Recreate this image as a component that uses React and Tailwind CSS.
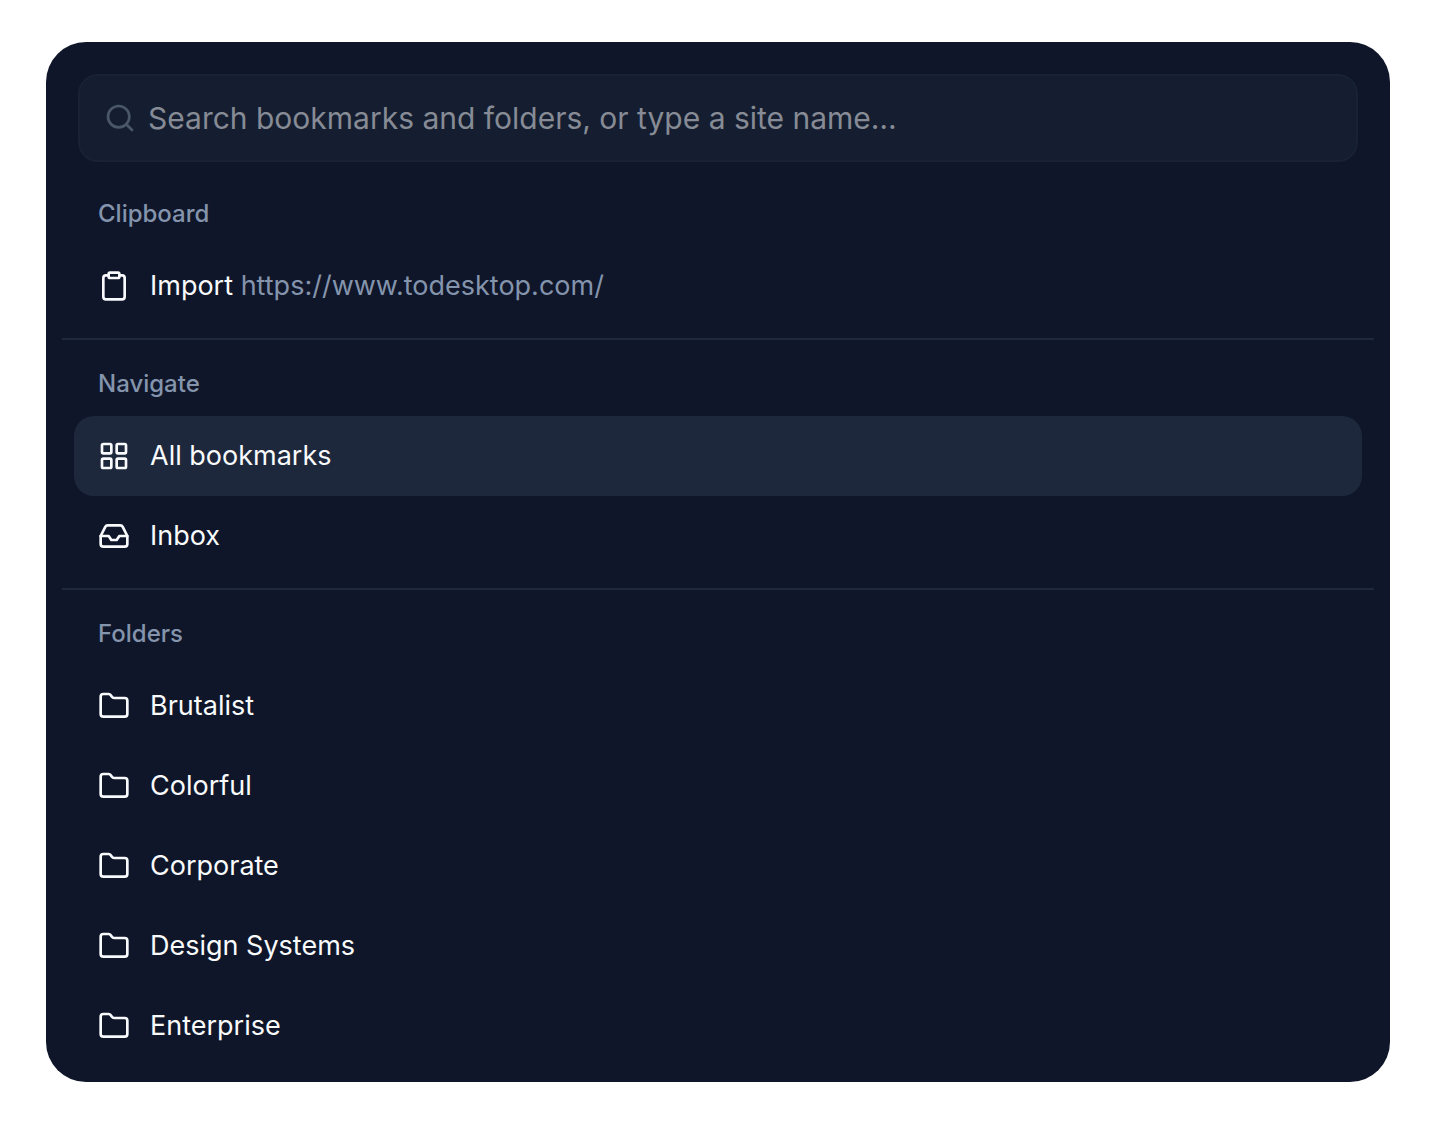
import React from "react";
import { useState } from "react";
import { Clipboard, Folder, Inbox, LayoutGrid, Search } from "lucide-react";

const groups = [
  {
    title: "Clipboard",
    items: [
      { id: "import", label: "Import", detail: "https://www.todesktop.com/", icon: Clipboard },
    ],
  },
  {
    title: "Navigate",
    items: [
      { id: "all", label: "All bookmarks", icon: LayoutGrid },
      { id: "inbox", label: "Inbox", icon: Inbox },
    ],
  },
  {
    title: "Folders",
    items: [
      { id: "brutalist", label: "Brutalist", icon: Folder },
      { id: "colorful", label: "Colorful", icon: Folder },
      { id: "corporate", label: "Corporate", icon: Folder },
      { id: "design", label: "Design Systems", icon: Folder },
      { id: "enterprise", label: "Enterprise", icon: Folder },
    ],
  },
];

function App() {
  const [query, setQuery] = useState("");
  const [active, setActive] = useState("all");

  return (
    <main className="min-h-screen bg-white px-[46px] pt-[42px] pb-10 font-[Inter,sans-serif]">
      <div className="rounded-[40px] bg-[#0f1629] px-4 pb-1">
        <div className="px-4 pt-8 pb-2">
          <label className="flex h-[88px] items-center gap-3 rounded-[20px] border-2 border-[#182135] bg-[#151e30] px-6">
            <Search className="size-8 shrink-0 text-[#4a5769]" />
            <input
              type="text"
              aria-label="Search"
              value={query}
              onChange={(e) => setQuery(e.target.value)}
              placeholder="Search bookmarks and folders, or type a site name…"
              className="min-w-0 flex-1 bg-transparent text-3xl text-slate-50 outline-none placeholder:text-[#868b95]"
            />
          </label>
        </div>

        {groups.map((group) => (
          <section key={group.title} className="border-b-2 border-[#1e293b] p-3 last:border-b-0">
            <h2 className="flex h-16 items-center px-6 text-2xl font-medium text-[#8494ac]">
              {group.title}
            </h2>
            {group.items.map((item) => {
              const Icon = item.icon;
              return (
                <button
                  key={item.id}
                  type="button"
                  onClick={() => setActive(item.id)}
                  className={
                    "flex h-20 w-full items-center gap-5 rounded-[20px] px-6 text-left text-[27px] text-slate-50 " +
                    (active === item.id ? "bg-[#1e283d]" : "")
                  }
                >
                  <Icon className="size-8 shrink-0" />
                  <span>
                    {item.label}
                    {item.detail && <span className="text-[#8494ac]"> {item.detail}</span>}
                  </span>
                </button>
              );
            })}
          </section>
        ))}
      </div>
    </main>
  );
}

export default App;
